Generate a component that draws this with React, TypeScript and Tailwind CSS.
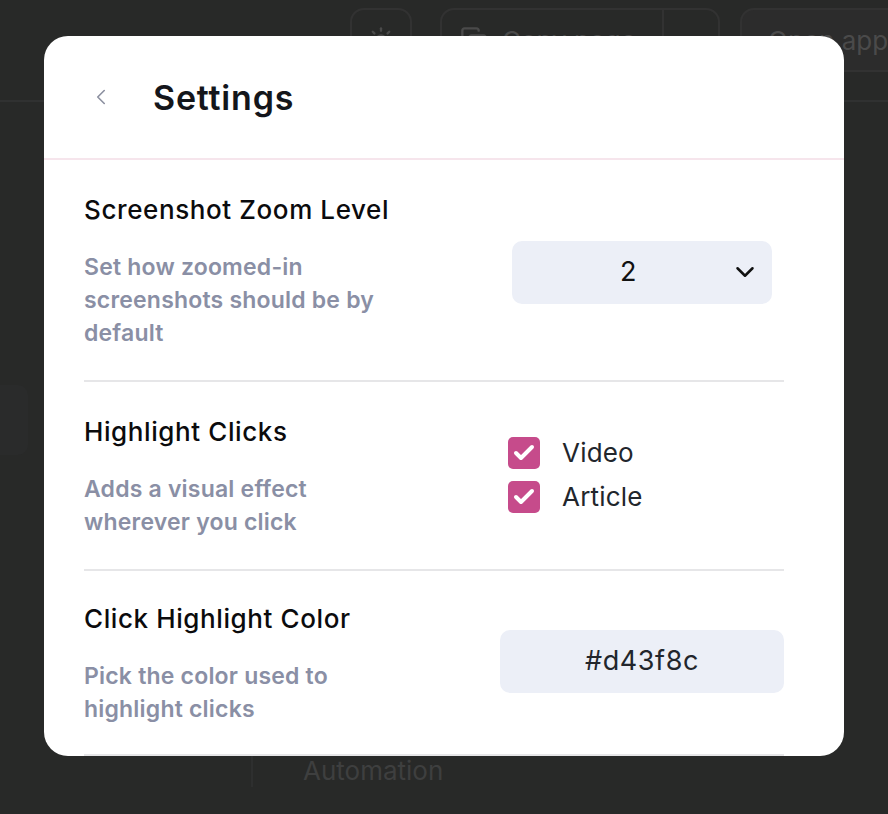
import { Check, ChevronDown, ChevronLeft, Copy, Sun } from "lucide-react";

const FONT = { fontFamily: "Inter, 'Noto Sans', sans-serif" };

function Divider() {
  return <div className="h-[2px] w-full bg-[#e6e6e8]" />;
}

function Row({
  title,
  desc,
  children,
  top = "pt-[34px]",
  bottom = "pb-[30px]",
}: {
  title: string;
  desc: string;
  children: React.ReactNode;
  top?: string;
  bottom?: string;
}) {
  return (
    <div className={`flex items-center ${top} ${bottom}`}>
      <div className="w-[300px] shrink-0">
        <div className="whitespace-nowrap text-[26px] leading-[32px] font-medium text-[#0b0b0d] tracking-[0.6px]">
          {title}
        </div>
        <div className="mt-[25px] text-[23px] leading-[33px] font-semibold text-[#8a8fa5] tracking-[0.2px]">
          {desc}
        </div>
      </div>
      {children}
    </div>
  );
}

function Box({ label }: { label: string }) {
  return (
    <label className="flex items-center gap-[22px]">
      <span className="flex h-[32px] w-[32px] items-center justify-center rounded-[5px] bg-[#c64b8b]">
        <Check size={24} strokeWidth={4} className="text-white" />
      </span>
      <span className="text-[26px] leading-[32px] text-[#22262c] tracking-[0.2px]">{label}</span>
    </label>
  );
}

export default function App() {
  return (
    <div className="relative h-[814px] w-[888px] overflow-hidden bg-[#282928]" style={FONT}>
      {/* ── Background app (dimmed) ─────────────────────────────── */}
      <div className="flex h-[102px] items-start whitespace-nowrap border-b-2 border-[#303131] pl-[350px] pt-[8px]">
        <div className="flex h-[64px] w-[62px] shrink-0 items-center justify-center rounded-[14px] border-2 border-[#323232] text-[#4a4a4a]">
          <Sun size={28} />
        </div>
        <div className="ml-[28px] flex h-[64px] w-[280px] shrink-0 items-center rounded-[14px] border-2 border-[#323232] text-[#4a4a4a]">
          <div className="flex flex-1 items-center gap-[14px] pl-[18px]">
            <Copy size={28} />
            <span className="text-[26px]">Copy page</span>
          </div>
          <div className="flex h-full w-[56px] items-center justify-center border-l-2 border-[#323232]">
            <ChevronDown size={24} />
          </div>
        </div>
        <div className="ml-[20px] flex h-[64px] w-[188px] shrink-0 items-center rounded-[14px] border-2 border-[#323232] bg-[#2c2c2c] pl-[26px] text-[26px] text-[#4a4a4a]">
          Open app
        </div>
      </div>
      <div className="mt-[283px] h-[70px] w-[28px] rounded-r-[10px] bg-[#2a2b2b]" />
      <div className="mt-[295px] flex h-[40px] items-center pl-[251px]">
        <div className="h-[34px] w-[2px] bg-[#2e2f2f]" />
        <span className="ml-[50px] text-[26px] text-[#3e3f3f]">Automation</span>
      </div>

      {/* ── Settings modal ───────────────────────────────────────── */}
      <div className="absolute left-[44px] top-[36px] flex h-[720px] w-[800px] flex-col rounded-[24px] bg-white">
        <div className="flex h-[124px] shrink-0 items-center border-b-2 border-[#f6e5ec] pl-[44px]">
          <ChevronLeft size={26} strokeWidth={1.5} className="text-[#8c90a0]" />
          <h1 className="ml-[39px] text-[34px] font-semibold tracking-[0.8px] text-[#14161b]">
            Settings
          </h1>
        </div>

        <div className="pl-[40px] pr-[60px]">
          <Row title="Screenshot Zoom Level" desc="Set how zoomed-in screenshots should be by default">
            <div className="ml-[128px] flex h-[63px] w-[260px] items-center rounded-[10px] bg-[#eceff7] pl-[108px] pr-[12px]">
              <span className="flex-1 text-[27px] text-[#111]">2</span>
              <ChevronDown size={30} strokeWidth={2} className="text-[#111]" />
            </div>
          </Row>
          <Divider />
          <Row title="Highlight Clicks" desc="Adds a visual effect wherever you click">
            <div className="ml-[124px] -mt-[6px] flex flex-col gap-[12px]">
              <Box label="Video" />
              <Box label="Article" />
            </div>
          </Row>
          <Divider />
          <Row title="Click Highlight Color" desc="Pick the color used to highlight clicks" top="pt-[32px]" bottom="pb-[28px]">
            <div className="ml-[116px] -mt-[6px] flex h-[63px] w-[284px] items-center justify-center rounded-[10px] bg-[#eceff7] text-[27px] tracking-[0.6px] text-[#22262c]">
              #d43f8c
            </div>
          </Row>
          <Divider />
        </div>
      </div>
    </div>
  );
}
